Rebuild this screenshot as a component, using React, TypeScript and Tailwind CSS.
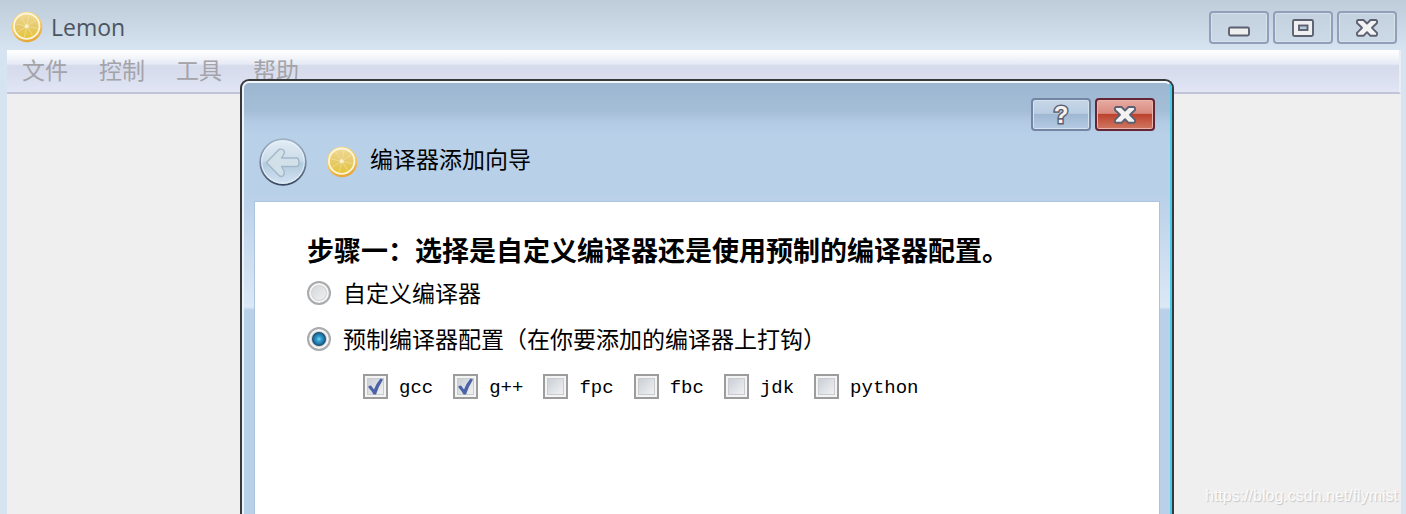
import { useState } from 'react'

const menus = ['文件', '控制', '工具', '帮助']

const compilers = [
  { name: 'gcc', checked: true },
  { name: 'g++', checked: true },
  { name: 'fpc', checked: false },
  { name: 'fbc', checked: false },
  { name: 'jdk', checked: false },
  { name: 'python', checked: false },
]

const modes = [
  { id: 'custom', label: '自定义编译器' },
  { id: 'preset', label: '预制编译器配置（在你要添加的编译器上打钩）' },
]

function LemonIcon({ id }: { id: string }) {
  const spokes = [0, 45, 90, 135, 180, 225, 270, 315]
  return (
    <svg viewBox="0 0 32 32" className="size-8 shrink-0" aria-hidden="true">
      <defs>
        <linearGradient id={`${id}-rind`} x1="0" y1="0" x2="0.3" y2="1">
          <stop offset="0" stopColor="#f3d98a" />
          <stop offset="0.6" stopColor="#f3c95f" />
          <stop offset="1" stopColor="#e8a93c" />
        </linearGradient>
        <linearGradient id={`${id}-pulp`} x1="0" y1="0" x2="0" y2="1">
          <stop offset="0" stopColor="#efd890" />
          <stop offset="0.5" stopColor="#e6ca6c" />
          <stop offset="1" stopColor="#e6c63a" />
        </linearGradient>
      </defs>
      <circle cx="16" cy="16" r="15.3" fill={`url(#${id}-rind)`} />
      <circle cx="15.7" cy="15.2" r="13.6" fill="#fdf6dc" />
      <circle cx="15.7" cy="15.2" r="11.8" fill={`url(#${id}-pulp)`} />
      {spokes.map((angle) => (
        <path
          key={angle}
          d="M15.7 15.2V4"
          stroke="#f7e9b4"
          strokeWidth="0.8"
          opacity="0.6"
          transform={`rotate(${angle + 12} 15.7 15.2)`}
        />
      ))}
      <circle cx="15.7" cy="15.2" r="2" fill="#faf0c8" />
    </svg>
  )
}

function CloseIcon() {
  return (
    <svg viewBox="0 0 24 20" className="h-5 w-6" aria-hidden="true">
      <path
        d="M3 2H8.5L12 5.5L15.5 2H21L22 3V5L17 9.8L22 14.8V16.8L21 17.8H15.5L12 14.2L8.5 17.8H3L2 16.8V14.8L7 9.8L2 5V3Z"
        fill="#f3f3f3"
        stroke="#5c6070"
        strokeWidth="1.9"
        strokeLinejoin="round"
      />
    </svg>
  )
}

function MinimizeIcon() {
  return (
    <svg viewBox="0 0 24 20" className="h-5 w-6" aria-hidden="true">
      <rect x="2" y="9.5" width="20" height="8" rx="1.5" fill="#efefef" stroke="#5c6070" strokeWidth="1.9" />
    </svg>
  )
}

function MaximizeIcon() {
  return (
    <svg viewBox="0 0 24 20" className="h-5 w-6" aria-hidden="true">
      <rect x="2" y="2" width="20" height="16" rx="1.5" fill="#efefef" stroke="#5c6070" strokeWidth="1.9" />
      <rect x="8" y="7.5" width="8.5" height="4.5" fill="#b9cadb" stroke="#5c6070" strokeWidth="1.9" />
    </svg>
  )
}

function BackIcon() {
  return (
    <svg viewBox="0 0 48 48" className="size-12" aria-hidden="true">
      <defs>
        <linearGradient id="back-fill" x1="0" y1="0" x2="0" y2="1">
          <stop offset="0" stopColor="#e3edf5" />
          <stop offset="0.46" stopColor="#cbdcea" />
          <stop offset="0.54" stopColor="#b4cbdf" />
          <stop offset="1" stopColor="#d3e4f3" />
        </linearGradient>
        <linearGradient id="back-edge" x1="0" y1="0" x2="0" y2="1">
          <stop offset="0" stopColor="#9eb2c6" />
          <stop offset="0.5" stopColor="#788ba2" />
          <stop offset="1" stopColor="#39485f" />
        </linearGradient>
      </defs>
      <circle cx="24" cy="24" r="22.8" fill="url(#back-fill)" stroke="url(#back-edge)" strokeWidth="1.7" />
      <circle cx="24" cy="24" r="21.2" fill="none" stroke="#e9f3fa" strokeWidth="1.2" opacity="0.7" />
      <path
        d="M7.5 24.5L20 11.5Q22 10.5 24.5 12Q26 13.5 25 16L22.5 20H38Q40 20.5 40 24.5Q40 28 38 28.5H22.5L25 33Q26 36 24.5 37.5Q22 39.5 20 37.5Z"
        fill="#d2e0ea"
        stroke="#a3b8c9"
        strokeWidth="1.4"
        strokeLinejoin="round"
      />
    </svg>
  )
}

const captionButton =
  'flex h-[33px] w-[60px] items-center justify-center rounded-[4px] border-2 border-[#929fb9] bg-linear-to-b from-[#c4d1df] to-[#ccd9e6] shadow-[inset_0_0_0_1px_#d6e1ec]'

function WizardDialog() {
  const [mode, setMode] = useState('preset')
  const [selected, setSelected] = useState<string[]>(
    compilers.filter((c) => c.checked).map((c) => c.name)
  )

  const toggle = (name: string) => {
    setSelected(
      selected.includes(name)
        ? selected.filter((n) => n !== name)
        : [...selected, name]
    )
  }

  return (
    <section
      role="dialog"
      aria-labelledby="wizard-title"
      className="absolute top-[79px] right-[232px] bottom-0 left-60 flex flex-col overflow-hidden rounded-t-[9px] border-2 border-b-0 border-[#37393d]"
    >
      <div className="flex grow flex-col rounded-t-[7px] border-2 border-b-0 border-t-[#f2f7fb] border-r-[#45cbe8] border-l-[#eef3f8] bg-[linear-gradient(#9cb6d1_0px,#a5bed8_28px,#b4cbe5_40px,#b9d0e9_54px,#b9d0e9_110px,#dbe8f6_224px,#b9d0e9_227px)] px-[11px]">
        <div className="flex justify-end gap-1 pt-[15px] pr-1">
          <button
            type="button"
            aria-label="?"
            className="flex h-[33px] w-[60px] items-center justify-center rounded-[4px] border-2 border-[#7286a3] bg-[linear-gradient(#c6d6e7_0%,#b9cde2_46%,#9fb8d2_50%,#b5cbe3_100%)] font-['Liberation_Sans'] text-[24px] leading-none font-bold text-[#f3f3f3] shadow-[inset_0_0_0_1px_#d5e2ef] [-webkit-text-stroke:3px_#5c6070] [paint-order:stroke_fill]"
          >
            ?
          </button>
          <button
            type="button"
            aria-label="关闭"
            className="flex h-[33px] w-[60px] items-center justify-center rounded-[4px] border-2 border-[#642636] bg-[linear-gradient(#e7aaa2_0%,#d98c80_46%,#bd432d_50%,#d07863_100%)] shadow-[inset_0_0_0_1px_#e9b5ab]"
          >
            <CloseIcon />
          </button>
        </div>

        <header className="flex items-center pt-[7px] pb-4 pl-1">
          <button type="button" aria-label="返回" className="rounded-full">
            <BackIcon />
          </button>
          <div className="flex items-center gap-3 pl-[19px]">
            <LemonIcon id="wizard" />
            <h1 id="wizard-title" className="pb-2 text-[23px] leading-7 text-black">
              编译器添加向导
            </h1>
          </div>
        </header>

        <div className="grow overflow-hidden bg-white pt-7 pl-[52px] shadow-[0_0_0_1px_#adc4de]">
          <h2 className="text-[27px] leading-10 font-bold whitespace-nowrap text-black">
            步骤一：选择是自定义编译器还是使用预制的编译器配置。
          </h2>

          <div className="mt-1.5 flex flex-col gap-3">
            {modes.map((m) => (
              <label key={m.id} className="flex items-center gap-3 text-[23px] leading-8 whitespace-nowrap text-black">
                <input
                  type="radio"
                  name="mode"
                  checked={mode === m.id}
                  onChange={() => setMode(m.id)}
                  className="size-6 shrink-0 appearance-none rounded-full border-2 border-[#a9abad] bg-[linear-gradient(135deg,#ccd0d4,#f8f8f8)] bg-origin-border shadow-[inset_0_0_0_2px_#f6f6f6,inset_0_0_0_3px_#d0d2d4] checked:bg-[radial-gradient(circle_at_50%_50%,#7fdcf8_0px,#3aa5d2_2px,#1f76a8_5px,#173f63_7px,#c5cdd4_8px)]"
                />
                <span className="pb-0.5">{m.label}</span>
              </label>
            ))}
          </div>

          <div className="mt-3 flex gap-5 pl-[56px]">
            {compilers.map((c) => (
              <label
                key={c.name}
                className="flex items-center gap-[11px] font-['Liberation_Mono'] text-[19px] leading-8 text-black"
              >
                <span className="grid size-[25px] shrink-0">
                  <input
                    type="checkbox"
                    checked={selected.includes(c.name)}
                    onChange={() => toggle(c.name)}
                    className="peer col-start-1 row-start-1 size-[25px] appearance-none border-2 border-[#9c9c9c] bg-[linear-gradient(135deg,#c2c8d0,#f8f8f8)] shadow-[inset_0_0_0_2px_#f4f4f4,inset_0_0_0_3px_#c9cbce]"
                  />
                  <svg
                    viewBox="0 0 25 25"
                    className="pointer-events-none invisible col-start-1 row-start-1 size-[25px] peer-checked:visible"
                    aria-hidden="true"
                  >
                    <path d="M5.5 13.5V12L8 11.5L11 15.5Q13.5 9 17.5 4.5L20 5.5Q15.5 12.5 13 20.5H10.5Q8.5 16.5 5.5 13.5Z" fill="#4b62a6" />
                  </svg>
                </span>
                <span className="pt-1">{c.name}</span>
              </label>
            ))}
          </div>
        </div>
      </div>
    </section>
  )
}

export default function App() {
  return (
    <main className="relative flex h-screen flex-col overflow-hidden bg-[linear-gradient(#bfccda_0px,#c8d5e2_22px,#d6e4f1_50px)] pr-[5px] pl-[7px] font-['Noto_Sans_CJK_SC',sans-serif]">
      <div className="flex h-[50px] shrink-0 items-center justify-between pr-1 pl-1">
        <div className="flex items-center gap-2 pt-1">
          <LemonIcon id="app" />
          <span className="font-['Open_Sans'] text-[23px] leading-8 text-[#4b5560]">Lemon</span>
        </div>
        <div className="flex gap-1 pt-[5px]">
          <button type="button" aria-label="最小化" className={captionButton}>
            <MinimizeIcon />
          </button>
          <button type="button" aria-label="最大化" className={captionButton}>
            <MaximizeIcon />
          </button>
          <button type="button" aria-label="关闭" className={captionButton}>
            <CloseIcon />
          </button>
        </div>
      </div>

      <nav className="flex h-11 shrink-0 items-center gap-[31px] border-r-2 border-b-2 border-r-[#e9edf6] border-b-[#c2c5d9] bg-[linear-gradient(#ffffff_0px,#f7f9fc_5px,#e6eaf4_14px,#d5daec_16px,#e1e5f4_42px)] pb-1 pl-[15px]">
        {menus.map((menu) => (
          <button key={menu} type="button" disabled className="text-[23px] leading-8 text-[#a3a3a8]">
            {menu}
          </button>
        ))}
      </nav>

      <div className="grow bg-[#efefef]" />

      <WizardDialog />

      <a
        href="https://blog.csdn.net/flymist"
        className="absolute right-2 bottom-2 font-['Liberation_Sans'] text-[16px] leading-5 text-[#fbfbfb] [text-shadow:1px_1px_1px_#c4c4c4]"
      >
        https://blog.csdn.net/flymist
      </a>
    </main>
  )
}
